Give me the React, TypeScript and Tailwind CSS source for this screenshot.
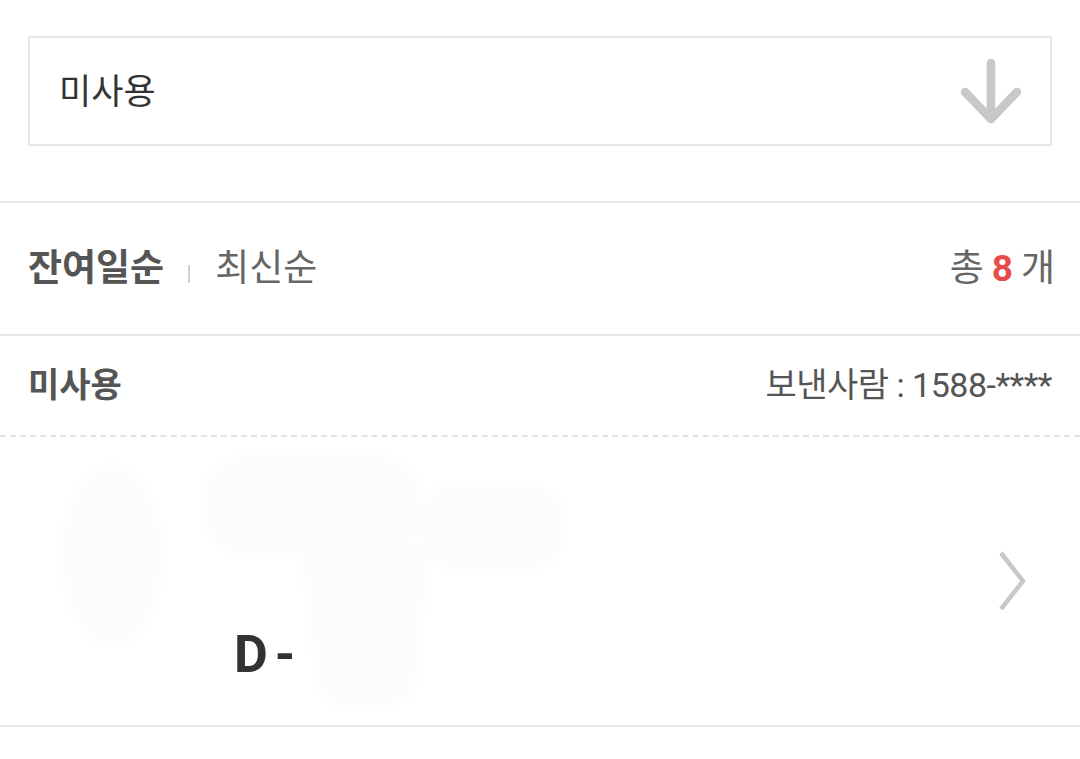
import React from "react";

function ArrowDownIcon() {
  return (
    <svg width="70" height="72" viewBox="0 0 70 72" fill="none">
      <path d="M35 6v56" stroke="#c8c8c8" strokeWidth="8.5" strokeLinecap="round" />
      <path d="M9 35l26 27 26-27" stroke="#c8c8c8" strokeWidth="8.5" strokeLinecap="round" strokeLinejoin="round" />
    </svg>
  );
}

function ChevronRight() {
  return (
    <svg width="30" height="62" viewBox="0 0 30 62" fill="none">
      <path d="M3 3l22 28L3 59" stroke="#c8c8c8" strokeWidth="4.5" />
    </svg>
  );
}

function Ghost() {
  return (
    <svg className="absolute inset-0" width="600" height="288" viewBox="0 0 600 288">
      <defs>
        <filter id="blur" x="-20%" y="-20%" width="140%" height="140%">
          <feGaussianBlur stdDeviation="4" />
        </filter>
      </defs>
      <g filter="url(#blur)" fill="#fcfcfc">
        <ellipse cx="112" cy="118" rx="50" ry="90" />
        <rect x="205" y="18" width="215" height="100" rx="40" />
        <rect x="418" y="48" width="147" height="85" rx="36" />
        <path d="M300 108 h130 l-16 150 q-45 30 -95 0 z" />
      </g>
    </svg>
  );
}

function ItemBlock() {
  return (
    <div className="flex items-center justify-between pr-[52px]">
      <div className="relative w-[600px] h-[288px] flex flex-col justify-end pl-[234px] pb-[40px]">
        <Ghost />
        <span className="relative text-[52px] leading-[60px] font-bold text-[#333] tracking-[-3px]">
          D -
        </span>
      </div>
      <ChevronRight />
    </div>
  );
}

function UnusedRow({ faded }: { faded?: boolean }) {
  return (
    <div className={faded ? "h-[99px] flex items-center justify-between px-[28px] opacity-40" : "h-[99px] flex items-center justify-between px-[28px]"}>
      <span className="text-[34px] font-bold text-[#555]">미사용</span>
      <span className="text-[34px] text-[#555] tracking-[-0.5px]">보낸사람 : 1588-****</span>
    </div>
  );
}

export default function App() {
  return (
    <div className="w-[1080px] h-[759px] overflow-hidden bg-white font-['Roboto','Noto_Sans_CJK_KR',sans-serif]">
      <div className="px-[28px] pt-[36px] pb-[55px]">
        <div className="h-[110px] border-2 border-[#e6e6e6] flex items-center justify-between pl-[29px] pr-[24px] pt-[4px]">
          <span className="text-[35px] text-[#333]">미사용</span>
          <ArrowDownIcon />
        </div>
      </div>
      <div className="h-[2px] bg-[#e6e6e6]" />
      <div className="h-[131px] flex items-center justify-between pl-[28px] pr-[25px]">
        <div className="flex items-center">
          <span className="text-[37px] font-bold text-[#555]">잔여일순</span>
          <span className="w-[2px] h-[18px] bg-[#cfcfcf] ml-[24px] mr-[25px] mt-[10px]" />
          <span className="text-[37px] text-[#666]">최신순</span>
        </div>
        <div className="flex items-center gap-[8px] text-[37px] text-[#666]">
          <span>총</span>
          <span className="font-bold text-[#e84b4b]">8</span>
          <span>개</span>
        </div>
      </div>
      <div className="h-[2px] bg-[#e6e6e6]" />
      <UnusedRow />
      <div className="border-t-2 border-dashed border-[#e2e2e2]" />
      <ItemBlock />
      <div className="h-[2px] bg-[#e6e6e6]" />
      <UnusedRow faded />
    </div>
  );
}
